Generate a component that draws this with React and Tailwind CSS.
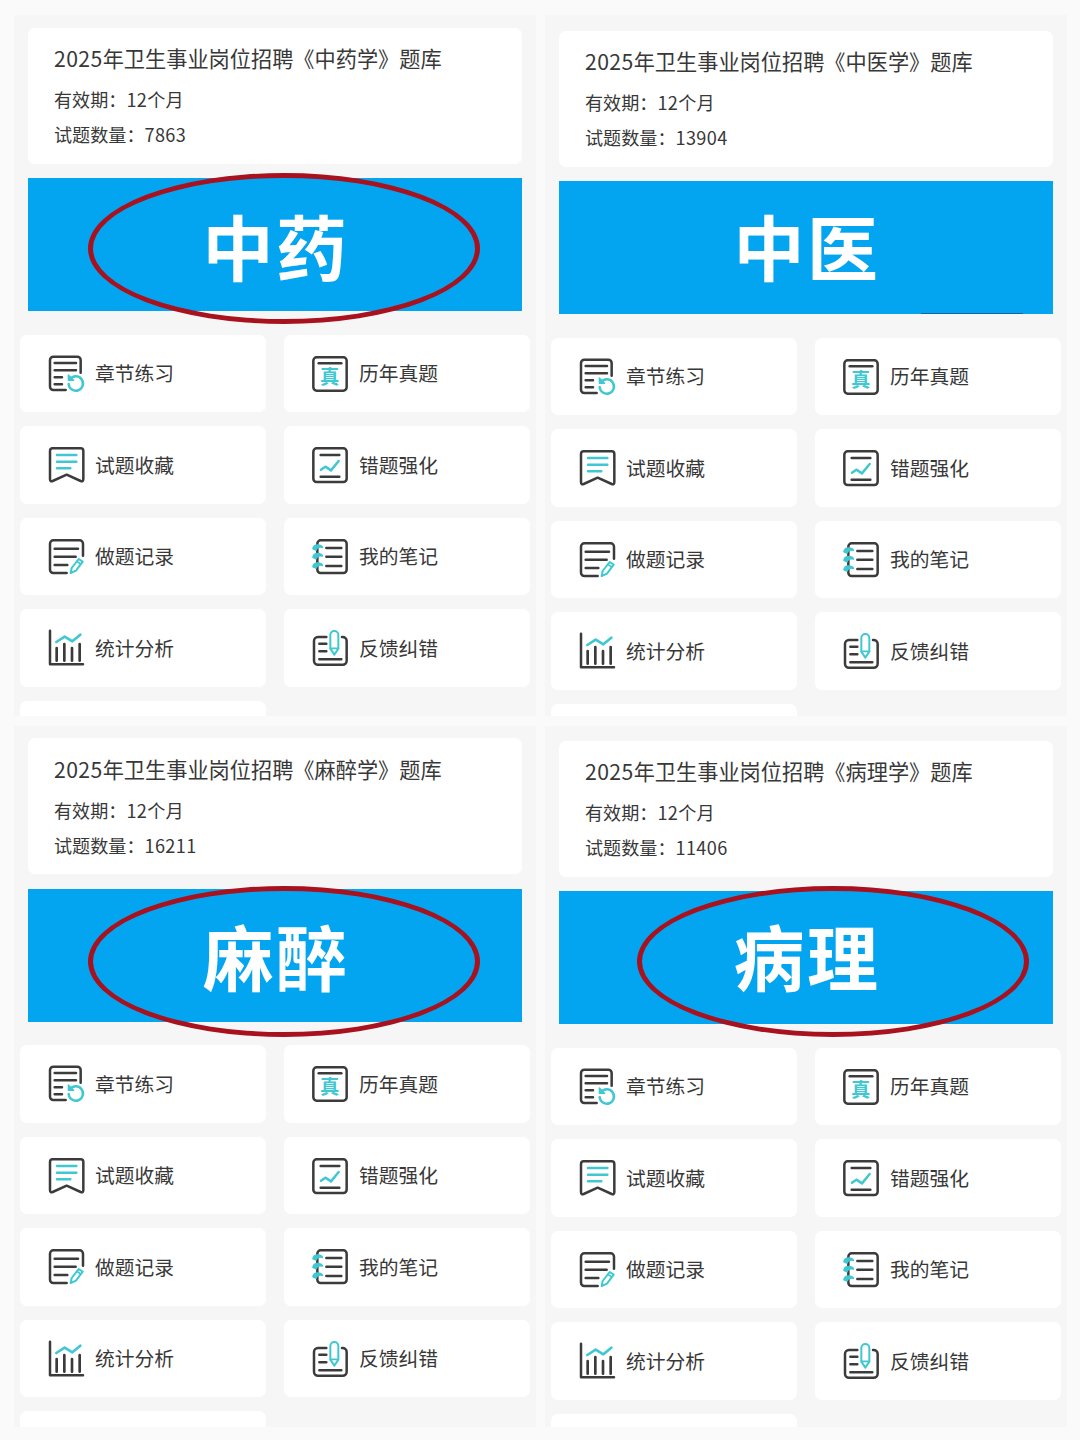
import React from 'react';

const DARK = '#3b3b3b';
const CYAN = '#3fc8d2';

function Icon({ children }) {
  return (
    <svg viewBox="0 0 108 108" className="w-9 h-9 mt-px shrink-0 overflow-visible" fill="none" stroke={DARK} strokeWidth="7.5" strokeLinecap="round" strokeLinejoin="round">
      {children}
    </svg>
  );
}

function PracticeIcon() {
  return (
    <Icon>
      <path d="M53 102H16a10 10 0 0 1-10-10V12A10 10 0 0 1 16 2H88a10 10 0 0 1 10 10V50" />
      <path d="M20 21H84M20 43H84M20 64H42M20 85H42" />
      <path d="M66 70A21.500 21.500 0 1 1 62 84" stroke={CYAN} />
      <path d="M61 57V73H77Z" fill={CYAN} stroke={CYAN} strokeWidth="4" />
    </Icon>
  );
}

function ExamIcon() {
  return (
    <Icon>
      <rect x="4" y="4" width="100" height="100" rx="10" />
      <path d="M20 22H88" />
      <text x="53" y="85" textAnchor="middle" fontSize="58" fontWeight="700" fill={CYAN} stroke="none">真</text>
    </Icon>
  );
}

function FavoriteIcon() {
  return (
    <Icon>
      <path d="M14 4H98a8 8 0 0 1 8 8V96q0 9-8 6L56 83L14 102q-8 3-8-6V12a8 8 0 0 1 8-8Z" />
      <path d="M27 24H85M27 44H85M27 64H67" stroke={CYAN} />
    </Icon>
  );
}

function MistakeIcon() {
  return (
    <Icon>
      <rect x="4" y="4" width="100" height="101" rx="10" />
      <path d="M26 24H82M26 89H82" />
      <path d="M27 68L40 59L57 70L80 42" stroke={CYAN} />
    </Icon>
  );
}

function RecordIcon() {
  return (
    <Icon>
      <path d="M56 102H16a10 10 0 0 1-10-10V14A10 10 0 0 1 16 4H95a10 10 0 0 1 10 10V50" />
      <path d="M20 29H90M20 53H83M20 78H58" />
      <path d="M68 102L71 87L92 60L104 68L84 95Z" stroke={CYAN} strokeWidth="6" />
      <path d="M87 67L98 75" stroke={CYAN} strokeWidth="5" />
    </Icon>
  );
}

function NotebookIcon() {
  return (
    <Icon>
      <rect x="16" y="4" width="88" height="98" rx="10" />
      <path d="M43 27H88M43 53H88M43 81H88" />
      <path
        d="M3 29Q5 18 17 18Q28 18 31 25Q16 21 12 33ZM3 55Q5 44 17 44Q28 44 31 51Q16 47 12 59ZM3 83Q5 72 17 72Q28 72 31 79Q16 75 12 87Z"
        fill={CYAN}
        stroke={CYAN}
        strokeWidth="5"
      />
    </Icon>
  );
}

function StatsIcon() {
  return (
    <Icon>
      <path d="M6 2V103H105" />
      <path d="M26 54V92M49 42V92M72 54V92M95 42V92" strokeWidth="8" />
      <path d="M25 36L50 20L73 34L97 14" stroke={CYAN} strokeWidth="8" />
    </Icon>
  );
}

function FeedbackIcon() {
  return (
    <Icon>
      <path d="M43 21H18A12 12 0 0 0 6 33V92a12 12 0 0 0 12 12H92a12 12 0 0 0 12-12V33A12 12 0 0 0 90 21" />
      <path d="M22 41H43M22 64H43M22 88H88" />
      <path d="M55 15a12 12 0 0 1 24 0V56L67 74L55 56Z" stroke={CYAN} strokeWidth="6" />
      <path d="M55 55H79" stroke={CYAN} strokeWidth="5" />
    </Icon>
  );
}

const MENU = [
  { label: '章节练习', icon: PracticeIcon },
  { label: '历年真题', icon: ExamIcon },
  { label: '试题收藏', icon: FavoriteIcon },
  { label: '错题强化', icon: MistakeIcon },
  { label: '做题记录', icon: RecordIcon },
  { label: '我的笔记', icon: NotebookIcon },
  { label: '统计分析', icon: StatsIcon },
  { label: '反馈纠错', icon: FeedbackIcon },
];

const PANELS = [
  { subject: '中药学', short: '中药', count: '7863', pad: 'pt-[12.5px]', banner: 'pb-px', ring: 'left-[60px] top-[-5px]' },
  { subject: '中医学', short: '中医', count: '13904', pad: 'pt-[15.5px]', banner: 'pb-[7px]', underline: true },
  { subject: '麻醉学', short: '麻醉', count: '16211', pad: 'pt-[12px]', banner: 'pb-px', ring: 'left-[60px] top-[-3px]' },
  { subject: '病理学', short: '病理', count: '11406', pad: 'pt-[14.5px]', banner: 'pb-[6px]', ring: 'left-[78px] top-[-5px]' },
];

function Panel({ panel }) {
  return (
    <section className={`bg-[#f6f6f6] overflow-hidden ${panel.pad}`}>
      <div className="mx-[14px] h-[136px] rounded-[7px] bg-white px-[26px] pt-[14.5px]">
        <h2 className="text-[21.2px] leading-[32px] whitespace-nowrap">
          <span className="tracking-[0.4px]">2025</span>年卫生事业岗位招聘《{panel.subject}》题库
        </h2>
        <p className="mt-[8px] text-[18.1px] leading-[35px]">有效期：<span className="tracking-[0.4px]">12</span>个月</p>
        <p className="text-[18.1px] leading-[35px]">试题数量：<span className="tracking-[0.4px]">{panel.count}</span></p>
      </div>

      <div className={`relative mx-[14px] mt-[14.5px] h-[133px] bg-[#04a5f0] flex items-center justify-center pl-[2px] ${panel.banner}`}>
        <span className="text-[71px] leading-none font-bold tracking-[2.5px] text-white">{panel.short}</span>
        {panel.ring && (
          <div className={`absolute w-[392px] h-[151px] rounded-[50%] border-[5px] border-[#a8111e] ${panel.ring}`} />
        )}
        {panel.underline && <div className="absolute right-[30px] bottom-0 h-px w-[102px] bg-[#16649a]" />}
      </div>

      <div className="mt-[23.5px] ml-[6px] grid grid-cols-[246px_246px] gap-x-[18px] gap-y-[14px]">
        {MENU.map(({ label, icon: MenuIcon }) => (
          <div key={label} className="flex h-[77.5px] items-center gap-[11px] rounded-[7px] bg-white pl-[28px]">
            <MenuIcon />
            <span className="pb-[0.5px] text-[19.8px] leading-none whitespace-nowrap">{label}</span>
          </div>
        ))}
        <div className="h-[77.5px] rounded-[7px] bg-white" />
      </div>
    </section>
  );
}

export default function App() {
  return (
    <main className="w-[1080px] h-[1440px] overflow-hidden bg-[#fafafa] pt-[15px] pl-[14px] font-['Noto_Sans_CJK_SC',sans-serif] text-[#383838]">
      <div className="grid grid-cols-[522px_522px] grid-rows-[701px_701px] gap-x-[9px] gap-y-[10px]">
        {PANELS.map((panel) => (
          <Panel key={panel.subject} panel={panel} />
        ))}
      </div>
    </main>
  );
}
